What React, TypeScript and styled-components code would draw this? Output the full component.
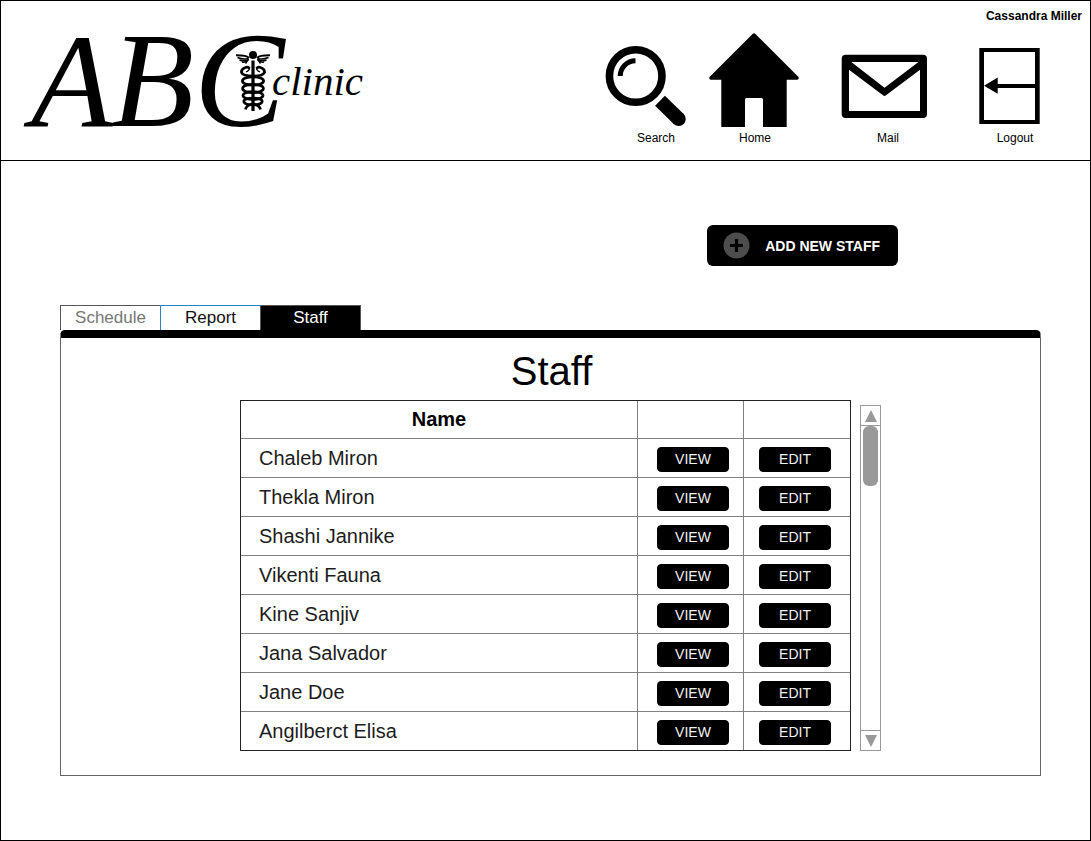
import React from "react";
import styled, { createGlobalStyle } from "styled-components";

const GlobalStyle = createGlobalStyle`
  *, *::before, *::after { box-sizing: border-box; }
  body {
    margin: 0;
    background: #fff;
    color: #000;
    font-family: "Liberation Sans", Arial, sans-serif;
  }
  button { font-family: inherit; cursor: pointer; }
`;

const Page = styled.div`
  display: flex;
  flex-direction: column;
  min-height: 100vh;
  border: 1px solid #000;
`;

const Header = styled.header`
  display: flex;
  justify-content: space-between;
  min-height: 160px;
  border-bottom: 1px solid #000;
`;

const LogoLink = styled.a`
  display: block;
  padding-left: 9px;
  color: #000;
`;

const LogoSvg = styled.svg`
  display: block;
  font-family: "Liberation Serif", "Times New Roman", serif;
  font-style: italic;
`;

const HeaderSide = styled.div`
  display: flex;
  flex-direction: column;
`;

const UserName = styled.div`
  padding: 8px 8px 0 0;
  font-size: 12px;
  line-height: 14px;
  font-weight: bold;
  text-align: right;
`;

const Nav = styled.nav`
  display: flex;
  padding: 7px 33px 0 0;
`;

const NavItem = styled.a`
  display: flex;
  flex-direction: column;
  align-items: center;
  color: #000;
  font-size: 12px;
  line-height: 16px;
  text-decoration: none;

  svg { display: block; overflow: visible; }
`;

const Main = styled.main`
  padding: 64px 49px 64px 59px;
`;

const Toolbar = styled.div`
  display: flex;
  justify-content: flex-end;
  padding: 0 143px 39px 0;
`;

const AddButton = styled.button`
  display: flex;
  align-items: center;
  gap: 15px;
  height: 41px;
  padding: 0 18px 0 16px;
  border: 0;
  border-radius: 6px;
  background: #000;
  color: #fff;
  font-size: 14px;
  font-weight: bold;
  line-height: 16px;
  white-space: nowrap;
`;

const Tabs = styled.div`
  display: flex;
`;

const Tab = styled.button<{ $tone: "muted" | "focus" | "active" }>`
  width: 100px;
  height: 25px;
  padding: 0;
  border: 1px solid ${(p) => (p.$tone === "focus" ? "#1f86c2" : "#555")};
  border-width: 1px 0 0 1px;
  background: ${(p) => (p.$tone === "active" ? "#000" : "#fff")};
  color: ${(p) => ({ muted: "#777", focus: "#111", active: "#fff" })[p.$tone]};
  font-size: 17px;
  line-height: 24px;

  &:last-child { width: 101px; border-right-width: 1px; }
`;

const Panel = styled.section`
  border: 1px solid #666;
  border-top: 8px solid #000;
  border-radius: 5px 5px 0 0;
  padding: 4px 159px 24px 179px;
`;

const Title = styled.h1`
  margin: 0;
  padding-right: 18px;
  font-size: 40px;
  font-weight: normal;
  line-height: 58px;
  text-align: center;
`;

const ListArea = styled.div`
  display: flex;
  gap: 9px;
`;

const Table = styled.table`
  flex: 1;
  border: 1px solid #222;
  border-spacing: 0;
  table-layout: fixed;
  font-size: 20px;
  line-height: 22px;

  th, td {
    height: 39px;
    padding: 0;
    border: 0 solid #808080;
    border-width: 0 1px 1px 0;
  }
  th { height: 38px; padding-bottom: 2px; }
  th:last-child, td:last-child { border-right-width: 0; }
  tbody tr:last-child td { height: 38px; border-bottom-width: 0; }
`;

const HeadCell = styled.th<{ $width?: number }>`
  width: ${(p) => (p.$width ? `${p.$width}px` : "auto")};
`;

const NameCell = styled.td`
  && { padding-left: 18px; }
  color: #1c1c1c;
`;

const ActionCell = styled.td<{ $inset: number }>`
  && { padding: 2px 0 0 ${(p) => p.$inset}px; }
`;

const RowButton = styled.button`
  display: block;
  width: 72px;
  height: 25px;
  padding: 0;
  border: 1px solid #000;
  border-radius: 4px;
  background: #000;
  color: #f2f2f2;
  font-size: 14px;
  line-height: 16px;
`;

const ScrollBar = styled.div`
  display: flex;
  flex-direction: column;
  width: 21px;
  margin-top: 5px;
  border: 1px solid #999;
`;

const ScrollArrow = styled.button`
  display: flex;
  align-items: center;
  justify-content: center;
  height: 19px;
  padding: 0;
  border: 0;
  background: #fff;
`;

const ScrollTrack = styled.div`
  flex: 1;
  border: 1px solid #999;
  border-width: 1px 0;
`;

const ScrollThumb = styled.div`
  height: 60px;
  margin: 0 2px;
  border-radius: 6px;
  background: #999;
`;

const Caduceus = () => (
  <g fill="none" stroke="#000">
    <circle cx="243" cy="54" r="4" fill="#000" stroke="none" />
    <g strokeWidth="1.5">
      <path d="M239 57Q237 54.300 226 54.300" strokeWidth="1.900" />
      <path d="M238.500 57.500Q233 59 227.500 56.500" />
      <path d="M238.500 58Q234.500 61 229.500 59" />
      <path d="M238.500 58.500Q236 62 232 61" />
      <path d="M238.300 58L235.500 62.500" />
      <path d="M247 57Q249 54.300 260 54.300" strokeWidth="1.900" />
      <path d="M247.500 57.500Q253 59 258.500 56.500" />
      <path d="M247.500 58Q251.500 61 256.500 59" />
      <path d="M247.500 58.500Q250 62 254 61" />
      <path d="M247.700 58L250.500 62.500" />
    </g>
    <path d="M243 59.500V110" strokeWidth="3.200" />
    <g strokeWidth="2.700">
      <path d="M239.500 67.500Q238 65.500 235.500 66.500Q231 68 231.500 71.500Q233 75 243 75T254.500 71.500Q255 68 250.500 66.500Q248 65.500 246.500 67.500" />
      <path d="M236 71Q239.500 69.500 239.500 67M250 71Q246.500 69.500 246.500 67" strokeWidth="1.300" />
      <ellipse cx="243" cy="80" rx="10.600" ry="4.200" />
      <ellipse cx="243" cy="87.500" rx="10.400" ry="4.200" />
      <ellipse cx="243" cy="94.500" rx="10" ry="4" />
      <ellipse cx="243" cy="100.500" rx="9.200" ry="3.400" />
      <path d="M242 103Q236 104.500 235.500 108.500M244 103Q250 104.500 250.500 108.500" />
    </g>
  </g>
);

const Logo = () => (
  <LogoSvg width="360" height="158" viewBox="0 0 360 158" role="img" aria-label="ABC clinic">
    <text x="21" y="125" fontSize="134">A</text>
    <text x="101" y="125" fontSize="136">B</text>
    <text x="184" y="125" fontSize="136">C</text>
    <text x="262" y="94" fontSize="41">clinic</text>
    <Caduceus />
  </LogoSvg>
);

const SearchIcon = () => (
  <svg width="102" height="100" viewBox="0 0 102 100" aria-hidden="true">
    <g fill="none" stroke="#000">
      <circle cx="30.700" cy="46" r="26.300" strokeWidth="7.600" />
      <path d="M15.200 46A15.300 15.300 0 0 1 30.500 30.700" strokeWidth="5" />
      <path d="M55 70.700L73.700 89" strokeWidth="14.100" />
    </g>
    <circle cx="73.700" cy="89" r="7.050" />
  </svg>
);

const HomeIcon = () => (
  <svg width="96" height="100" viewBox="0 0 96 100" aria-hidden="true">
    <path d="M45.800 3.800Q47 2.700 48.200 3.800L91.500 47Q92.500 49.500 90 49.700H79.700V97H56V69.500Q56 68 54.500 68H39.500Q38 68 38 69.500V97H14.300V49.700H4Q1.500 49.500 2.500 47Z" />
  </svg>
);

const MailIcon = () => (
  <svg width="170" height="100" viewBox="0 0 170 100" aria-hidden="true">
    <path
      fillRule="evenodd"
      d="M42.700 24.700H120Q124 24.700 124 28.700V84Q124 88 120 88H42.700Q38.700 88 38.700 84V28.700Q38.700 24.700 42.700 24.700ZM48.300 32L81.500 57.700L115.500 32ZM46 39.700V81H117V39.700L83 65.300Q81.500 66.500 80 65.300Z"
    />
  </svg>
);

const LogoutIcon = () => (
  <svg width="84" height="100" viewBox="0 0 84 100" aria-hidden="true">
    <path
      fillRule="evenodd"
      d="M6.300 18H66.700V94H6.300ZM11 22V90H62V22Z"
    />
    <path d="M11 55.700L24.700 47.500V54H63V58H24.700V63.700Z" />
  </svg>
);

const PlusIcon = () => (
  <svg width="27" height="27" viewBox="0 0 27 27" aria-hidden="true">
    <circle cx="13.500" cy="13.500" r="13" fill="#4d4d4d" />
    <path d="M13.500 7V20M7 13.500H20" stroke="#000" strokeWidth="3.200" />
  </svg>
);

const navItems = [
  { label: "Search", Icon: SearchIcon },
  { label: "Home", Icon: HomeIcon },
  { label: "Mail", Icon: MailIcon },
  { label: "Logout", Icon: LogoutIcon },
];

const staff = [
  "Chaleb Miron",
  "Thekla Miron",
  "Shashi Jannike",
  "Vikenti Fauna",
  "Kine Sanjiv",
  "Jana Salvador",
  "Jane Doe",
  "Angilberct Elisa",
];

export default function App() {
  return (
    <Page>
      <GlobalStyle />
      <Header>
        <LogoLink href="#home">
          <Logo />
        </LogoLink>
        <HeaderSide>
          <UserName>Cassandra Miller</UserName>
          <Nav>
            {navItems.map(({ label, Icon }) => (
              <NavItem key={label} href={`#${label.toLowerCase()}`}>
                <Icon />
                {label}
              </NavItem>
            ))}
          </Nav>
        </HeaderSide>
      </Header>
      <Main>
        <Toolbar>
          <AddButton type="button">
            <PlusIcon />
            ADD NEW STAFF
          </AddButton>
        </Toolbar>
        <Tabs role="tablist">
          <Tab type="button" role="tab" $tone="muted">Schedule</Tab>
          <Tab type="button" role="tab" $tone="focus">Report</Tab>
          <Tab type="button" role="tab" aria-selected="true" $tone="active">Staff</Tab>
        </Tabs>
        <Panel>
          <Title>Staff</Title>
          <ListArea>
            <Table>
              <thead>
                <tr>
                  <HeadCell scope="col">Name</HeadCell>
                  <HeadCell scope="col" $width={106} aria-label="View" />
                  <HeadCell scope="col" $width={106} aria-label="Edit" />
                </tr>
              </thead>
              <tbody>
                {staff.map((name) => (
                  <tr key={name}>
                    <NameCell>{name}</NameCell>
                    <ActionCell $inset={19}>
                      <RowButton type="button">VIEW</RowButton>
                    </ActionCell>
                    <ActionCell $inset={15}>
                      <RowButton type="button">EDIT</RowButton>
                    </ActionCell>
                  </tr>
                ))}
              </tbody>
            </Table>
            <ScrollBar>
              <ScrollArrow type="button" aria-label="Scroll up">
                <svg width="12" height="12" viewBox="0 0 12 12" fill="#999" aria-hidden="true">
                  <path d="M6 0L12 12H0Z" />
                </svg>
              </ScrollArrow>
              <ScrollTrack>
                <ScrollThumb />
              </ScrollTrack>
              <ScrollArrow type="button" aria-label="Scroll down">
                <svg width="12" height="12" viewBox="0 0 12 12" fill="#999" aria-hidden="true">
                  <path d="M0 0H12L6 12Z" />
                </svg>
              </ScrollArrow>
            </ScrollBar>
          </ListArea>
        </Panel>
      </Main>
    </Page>
  );
}
